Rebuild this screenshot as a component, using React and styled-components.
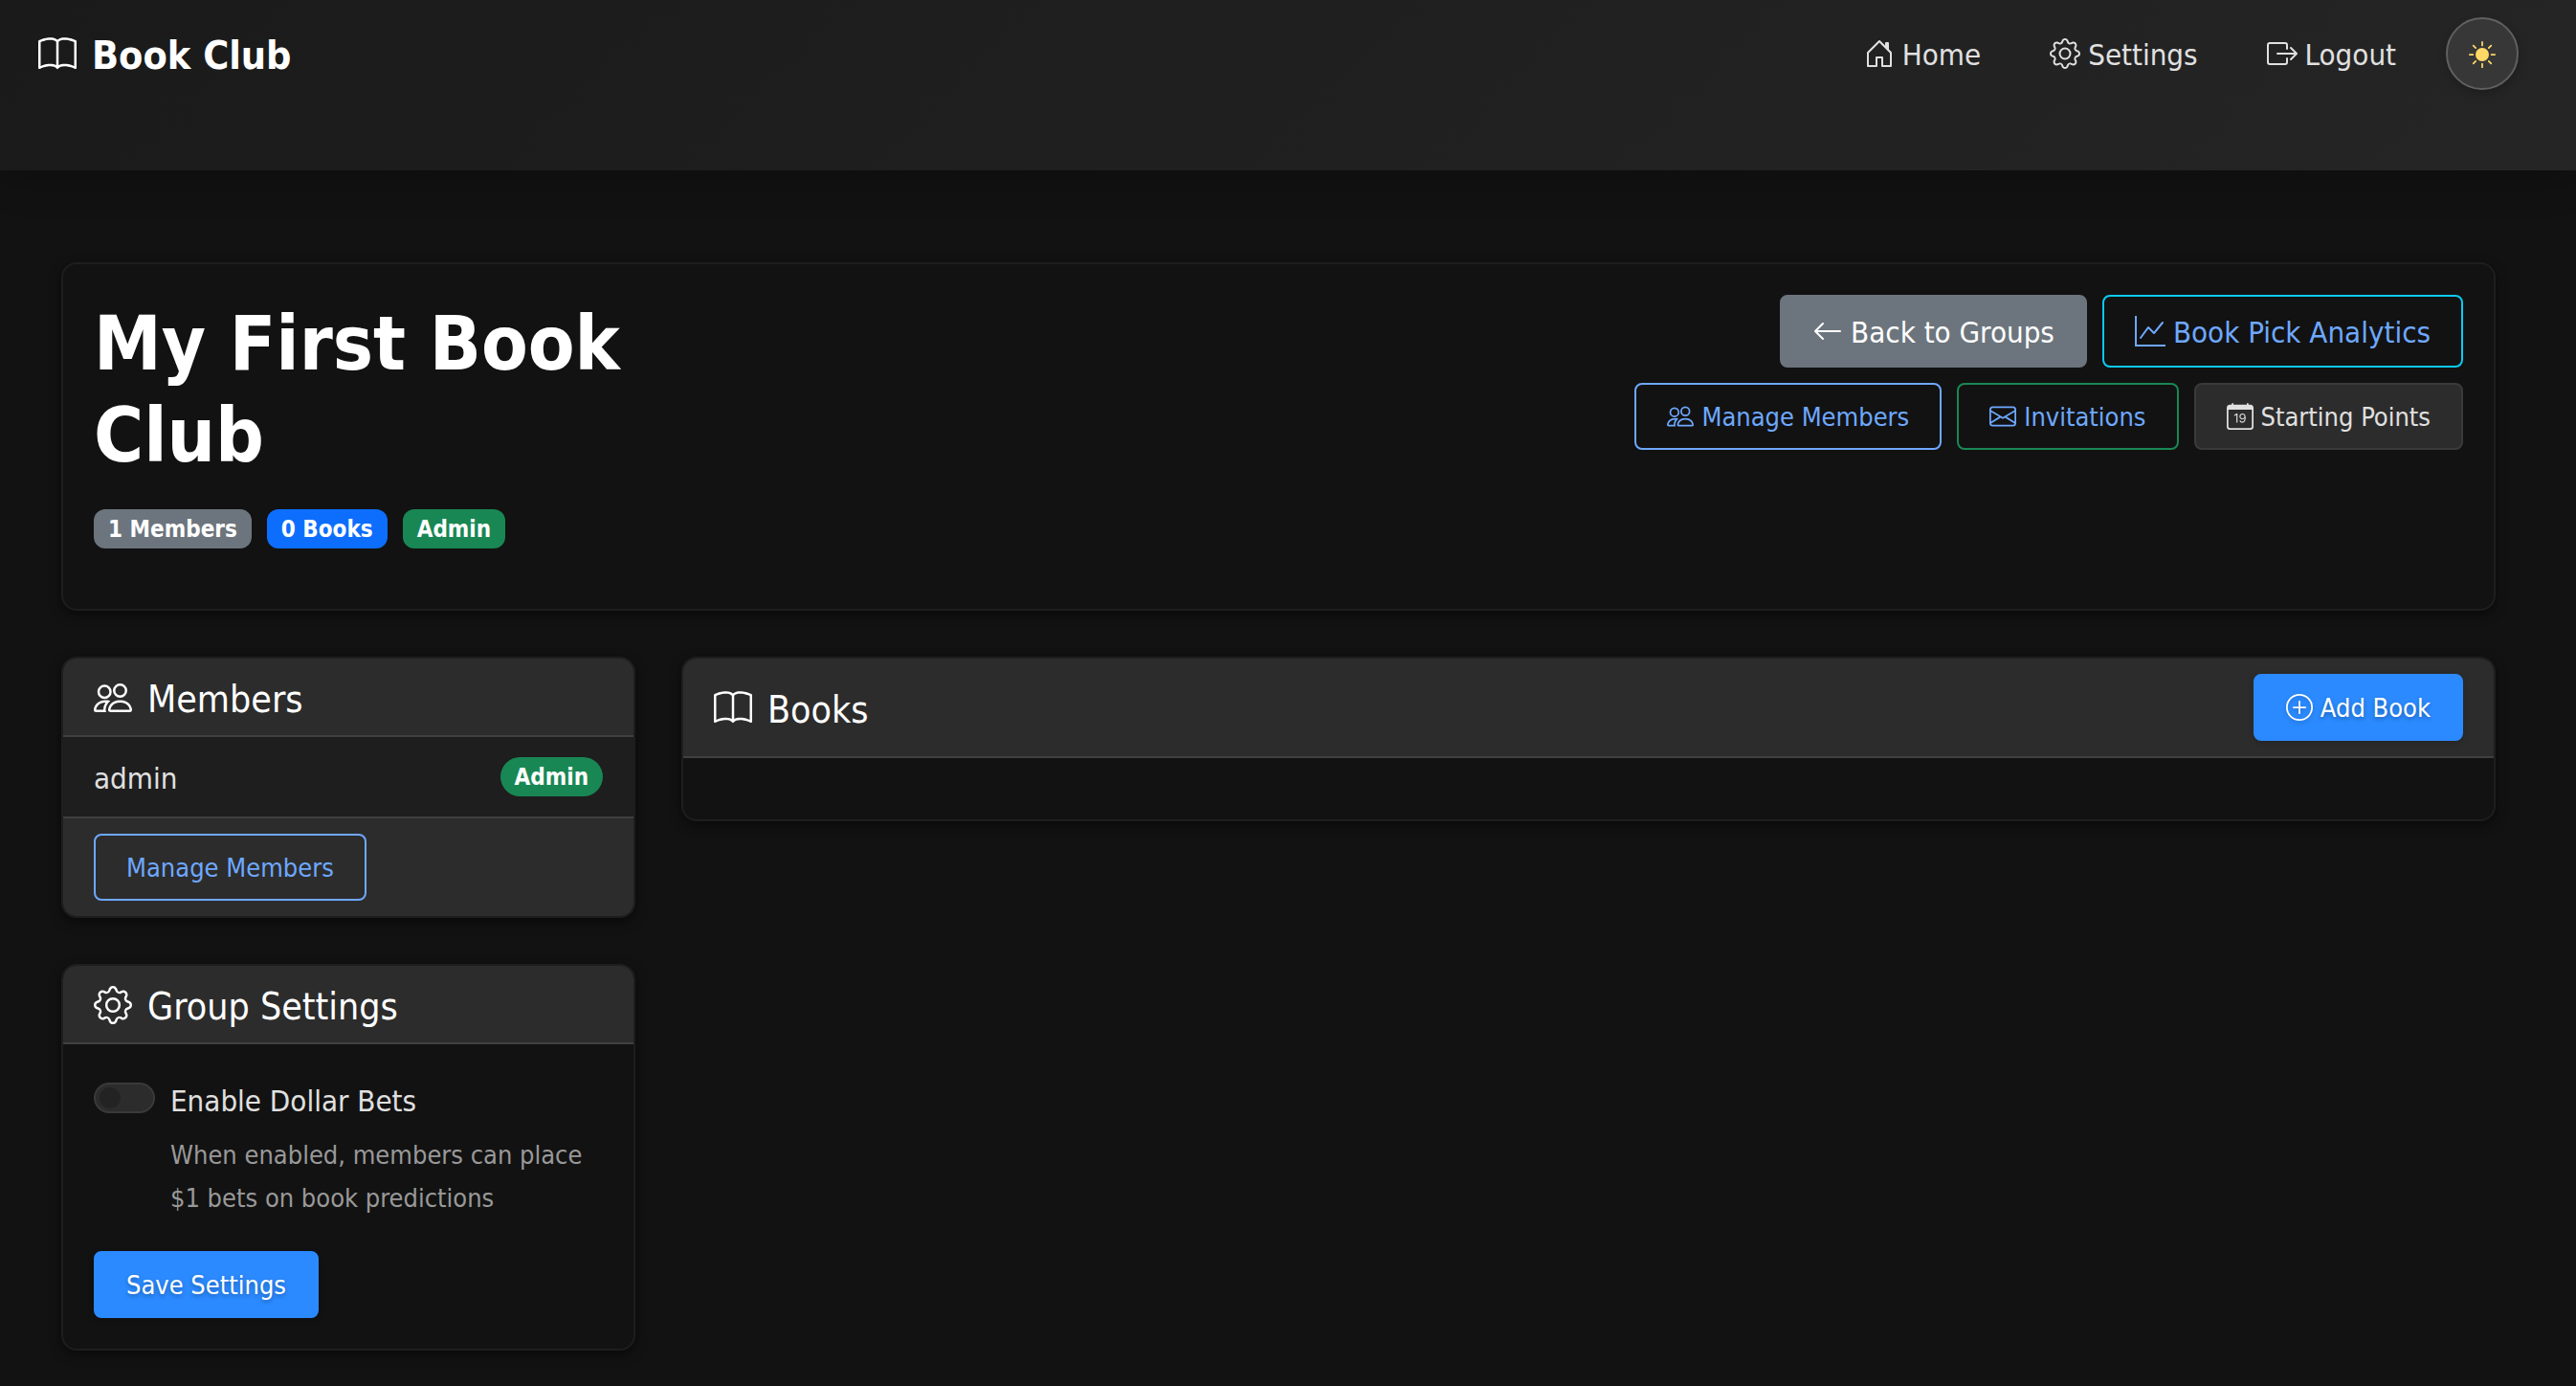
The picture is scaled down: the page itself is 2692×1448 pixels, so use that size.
import React from "react";
import styled, { createGlobalStyle, css } from "styled-components";
import {
  BsBook,
  BsHouseDoor,
  BsGear,
  BsBoxArrowRight,
  BsSunFill,
  BsArrowLeft,
  BsGraphUp,
  BsPeople,
  BsEnvelope,
  BsCalendarDate,
  BsPlusCircle,
} from "react-icons/bs";

const GlobalStyle = createGlobalStyle`
  *, *::before, *::after { box-sizing: border-box; }
  body {
    margin: 0;
    background: #121212;
    color: #e0e0e0;
    font-family: "DejaVu Sans Condensed", "DejaVu Sans", sans-serif;
    font-size: 31px;
    line-height: 51px;
  }
  h1, h2, p, ul { margin: 0; padding: 0; }
  button { font-family: inherit; cursor: pointer; }
`;

const largeIcon = css`
  svg {
    width: 40px;
    height: 40px;
    margin-right: 16px;
    vertical-align: -5px;
  }
`;

const mediumIcon = css`
  svg {
    width: 32px;
    height: 32px;
    margin-right: 8px;
    vertical-align: -4px;
  }
`;

const smallIcon = css`
  svg {
    width: 28px;
    height: 28px;
    margin-right: 8px;
    vertical-align: -4px;
  }
`;

const Navbar = styled.header`
  display: flex;
  justify-content: space-between;
  align-items: flex-start;
  padding: 18px 60px 84px 40px;
  background: linear-gradient(135deg, #1a1a1a 0%, #252525 100%);
  box-shadow: 0 4px 40px rgba(0, 0, 0, 0.3);
`;

const Brand = styled.a`
  height: 76px;
  color: #fff;
  font-size: 41px;
  font-weight: 700;
  line-height: 80px;
  text-decoration: none;
  ${largeIcon}
`;

const NavList = styled.nav`
  display: flex;
  align-items: center;
  gap: 8px;
`;

const NavLink = styled.a`
  height: 76px;
  padding: 0 32px;
  color: #e0e0e0;
  line-height: 79px;
  text-decoration: none;
  ${mediumIcon}
`;

const ThemeToggle = styled.button`
  display: grid;
  place-items: center;
  width: 76px;
  height: 76px;
  margin-left: 12px;
  padding: 2px 0 0;
  border: 2px solid #606060;
  border-radius: 50%;
  background: #373737;
  color: #ffd966;
  font-size: 28px;
  box-shadow: 0 4px 8px rgba(0, 0, 0, 0.2);
`;

const Main = styled.main`
  display: flex;
  flex-direction: column;
  gap: 48px;
  padding: 96px 84px 32px 64px;
`;

const Card = styled.section`
  border: 2px solid #1e1e1e;
  border-radius: 16px;
  background: #121212;
  box-shadow: 0 4px 12px rgba(0, 0, 0, 0.5);
  overflow: hidden;
`;

const Summary = styled.div`
  display: flex;
  justify-content: space-between;
  align-items: flex-start;
  padding: 32px 32px 63px;
`;

const SummaryText = styled.div`
  max-width: 600px;
`;

const GroupTitle = styled.h1`
  padding-top: 3px;
  margin-bottom: 29px;
  color: #fff;
  font-size: 79px;
  font-weight: 700;
  line-height: 96px;
`;

const Badges = styled.div`
  display: flex;
  gap: 16px;
`;

const Badge = styled.span`
  padding: 9px 15px 7px;
  border-radius: ${(p) => (p.$pill ? "21px" : "12px")};
  background: ${(p) => p.$color};
  color: #fff;
  font-size: 24px;
  font-weight: 700;
  line-height: 25px;
`;

const ButtonRows = styled.div`
  display: flex;
  flex-direction: column;
  gap: 16px;
`;

const ButtonRow = styled.div`
  display: flex;
  justify-content: flex-end;
  gap: 16px;
`;

const variants = {
  secondary: css`
    border-color: #6c757d;
    background: #6c757d;
    color: #fff;
  `,
  info: css`
    border-color: #0dcaf0;
    color: #6ea8fe;
  `,
  outline: css`
    border-color: #6ea8fe;
    color: #6ea8fe;
  `,
  success: css`
    border-color: #198754;
    color: #6ea8fe;
  `,
  dark: css`
    border-color: #3a3a3a;
    background: #2c2c2c;
    color: #e0e0e0;
  `,
  primary: css`
    border-color: #2b8aff;
    background: #2b8aff;
    color: #fff;
    text-shadow: 0 2px 4px rgba(0, 0, 0, 0.3);
    box-shadow: 0 2px 6px rgba(0, 0, 0, 0.2);
    svg { filter: drop-shadow(0 2px 2px rgba(0, 0, 0, 0.2)); }
  `,
};

const Button = styled.button`
  display: block;
  padding: 13px 32px 11px;
  border: 2px solid transparent;
  border-radius: 8px;
  background: transparent;
  font-size: ${(p) => (p.$large ? "31px" : "27px")};
  line-height: ${(p) => (p.$large ? "48px" : "42px")};
  white-space: nowrap;
  ${(p) => (p.$large ? mediumIcon : smallIcon)}
  ${(p) => variants[p.$variant]}
`;

const Columns = styled.div`
  display: grid;
  grid-template-columns: 600px 1fr;
  align-items: start;
  gap: 48px;
`;

const Sidebar = styled.div`
  display: flex;
  flex-direction: column;
  gap: 48px;
`;

const CardHeader = styled.div`
  display: flex;
  justify-content: space-between;
  align-items: center;
  padding: 16px 32px;
  border-bottom: 2px solid #404040;
  background: #2c2c2c;
`;

const CardTitle = styled.h2`
  height: 48px;
  color: #fff;
  font-size: 39px;
  font-weight: 400;
  line-height: 54px;
  ${largeIcon}
`;

const MemberList = styled.ul`
  list-style: none;
`;

const Member = styled.li`
  display: flex;
  justify-content: space-between;
  align-items: center;
  padding: 16px 32px;
  background: #1e1e1e;
`;

const MemberName = styled.span`
  height: 51px;
  line-height: 55px;
`;

const CardFooter = styled.div`
  padding: 16px 32px;
  border-top: 2px solid #404040;
  background: #2c2c2c;
`;

const SettingsForm = styled.form`
  display: flex;
  flex-direction: column;
  align-items: flex-start;
  gap: 33px;
  padding: 32px;
`;

const SwitchField = styled.div`
  display: grid;
  grid-template-columns: 64px 1fr;
  column-gap: 16px;
  row-gap: 10px;
`;

const SwitchLabel = styled.label`
  height: 51px;
  line-height: 55px;
`;

const Switch = styled.input`
  appearance: none;
  display: flex;
  align-items: center;
  width: 64px;
  height: 32px;
  margin: 8px 0 0;
  padding: 0 4px;
  border: 2px solid #3a3a3a;
  border-radius: 16px;
  background: #2c2c2c;
  &::before {
    content: "";
    width: 22px;
    height: 22px;
    border-radius: 50%;
    background: #232323;
  }
  &:checked { justify-content: flex-end; }
`;

const Help = styled.p`
  grid-column: 2;
  color: #999;
  font-size: 27px;
  line-height: 45px;
`;

const BooksBody = styled.div`
  padding: 32px;
`;

export default function App() {
  return (
    <>
      <GlobalStyle />
      <Navbar>
        <Brand href="#"><BsBook />Book Club</Brand>
        <NavList>
          <NavLink href="#home"><BsHouseDoor />Home</NavLink>
          <NavLink href="#settings"><BsGear />Settings</NavLink>
          <NavLink href="#logout"><BsBoxArrowRight />Logout</NavLink>
          <ThemeToggle type="button" aria-label="Toggle theme"><BsSunFill /></ThemeToggle>
        </NavList>
      </Navbar>
      <Main>
        <Card>
          <Summary>
            <SummaryText>
              <GroupTitle>My First Book Club</GroupTitle>
              <Badges>
                <Badge $color="#6c757d">1 Members</Badge>
                <Badge $color="#0d6efd">0 Books</Badge>
                <Badge $color="#198754">Admin</Badge>
              </Badges>
            </SummaryText>
            <ButtonRows>
              <ButtonRow>
                <Button type="button" $large $variant="secondary"><BsArrowLeft />Back to Groups</Button>
                <Button type="button" $large $variant="info"><BsGraphUp />Book Pick Analytics</Button>
              </ButtonRow>
              <ButtonRow>
                <Button type="button" $variant="outline"><BsPeople />Manage Members</Button>
                <Button type="button" $variant="success"><BsEnvelope />Invitations</Button>
                <Button type="button" $variant="dark"><BsCalendarDate />Starting Points</Button>
              </ButtonRow>
            </ButtonRows>
          </Summary>
        </Card>
        <Columns>
          <Sidebar>
            <Card>
              <CardHeader>
                <CardTitle><BsPeople />Members</CardTitle>
              </CardHeader>
              <MemberList>
                <Member>
                  <MemberName>admin</MemberName>
                  <Badge $pill $color="#198754">Admin</Badge>
                </Member>
              </MemberList>
              <CardFooter>
                <Button type="button" $variant="outline">Manage Members</Button>
              </CardFooter>
            </Card>
            <Card>
              <CardHeader>
                <CardTitle><BsGear />Group Settings</CardTitle>
              </CardHeader>
              <SettingsForm onSubmit={(e) => e.preventDefault()}>
                <SwitchField>
                  <Switch type="checkbox" id="dollar-bets" aria-describedby="dollar-bets-help" />
                  <SwitchLabel htmlFor="dollar-bets">Enable Dollar Bets</SwitchLabel>
                  <Help id="dollar-bets-help">
                    When enabled, members can place $1 bets on book predictions
                  </Help>
                </SwitchField>
                <Button type="submit" $variant="primary">Save Settings</Button>
              </SettingsForm>
            </Card>
          </Sidebar>
          <Card>
            <CardHeader>
              <CardTitle><BsBook />Books</CardTitle>
              <Button type="button" $variant="primary"><BsPlusCircle />Add Book</Button>
            </CardHeader>
            <BooksBody />
          </Card>
        </Columns>
      </Main>
    </>
  );
}
